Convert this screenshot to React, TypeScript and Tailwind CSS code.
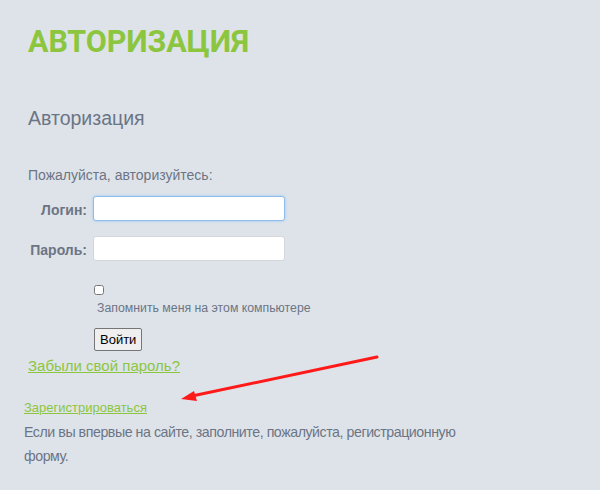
import React from 'react'

const App: React.FC = () => {
  return (
    <div className="relative h-[490px] w-[600px] overflow-hidden bg-[#dee3ea] font-['Liberation_Sans',Arial,sans-serif] text-[#6c7584]">
      <div className="pl-[28px] pt-[22px]">
        <h1 className="font-['Roboto',sans-serif] text-[30.5px] font-bold leading-[40px] tracking-[-0.1px] text-[#8cc63f]">
          АВТОРИЗАЦИЯ
        </h1>

        <h2 className="mt-[44px] text-[19.5px] leading-[24px]">Авторизация</h2>

        <p className="mt-[37px] text-[14px] leading-[16px]">Пожалуйста, авторизуйтесь:</p>

        <div className="mt-[13px] grid grid-cols-[59px_192px] items-center gap-x-[6px] gap-y-[15px]">
          <label className="pt-[3px] text-right text-[14px] font-bold">Логин:</label>
          <input
            className="h-[25px] rounded-[3px] border border-[#8fbbe8] bg-white px-[6px] shadow-[0_0_3px_#9cc8f2] outline-none"
            autoFocus
          />
          <label className="pt-[3px] text-right text-[14px] font-bold">Пароль:</label>
          <input type="password" className="h-[25px] rounded-[3px] border border-[#d3d7dc] bg-white px-[6px] outline-none" />
        </div>

        <div className="ml-[66px] mt-[24px]">
          <input type="checkbox" className="m-0 block h-[10px] w-[10px]" />
          <div className="mt-[5px] pl-[3px] text-[12.3px] leading-[16px]">Запомнить меня на этом компьютере</div>
          <button className="mt-[12px] h-[23px] rounded-[2px] border border-[#767676] bg-[#efefef] px-[5px] text-[13px] leading-[18px] text-black">
            Войти
          </button>
        </div>

        <a href="#" className="mt-[6px] block text-[15px] leading-[18px] text-[#8cc63f] underline">
          Забыли свой пароль?
        </a>
      </div>

      <div className="w-[470px] pl-[24px] pt-[24px]">
        <a href="#" className="block text-[13px] leading-[18px] text-[#8cc63f] underline">
          Зарегистрироваться
        </a>
        <p className="mt-[3px] text-[14.2px] leading-[24px] tracking-[-0.45px]">
          Если вы впервые на сайте, заполните, пожалуйста, регистрационную форму.
        </p>
      </div>

      <svg className="absolute left-0 top-0" width="600" height="490" viewBox="0 0 600 490">
        <line x1="377" y1="357" x2="192" y2="396" stroke="#ff1a1a" strokeWidth="3" strokeLinecap="round" />
        <polygon points="181,399 194,391 197,401" fill="#ff1a1a" />
      </svg>
    </div>
  )
}

export default App
